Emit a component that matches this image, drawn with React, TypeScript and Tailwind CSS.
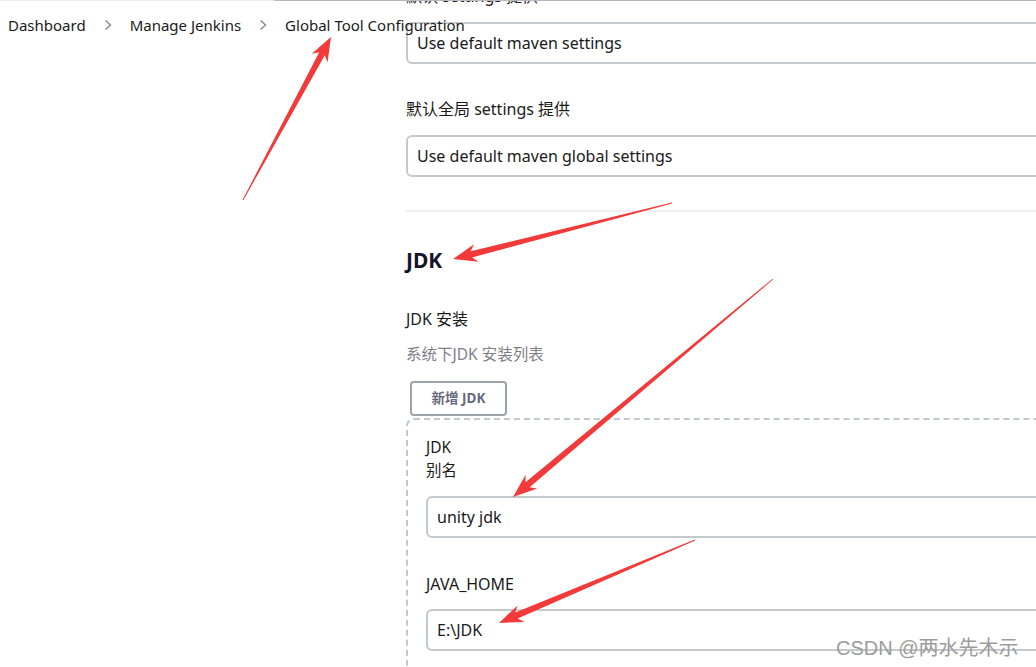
import React from 'react'

const font = { fontFamily: '"Noto Sans", "Noto Sans CJK SC", sans-serif' }

type Arrow = { tail: [number, number]; tip: [number, number] }

const arrows: Arrow[] = [
  { tail: [243, 200], tip: [331, 37] },
  { tail: [672, 203], tip: [453, 259] },
  { tail: [773, 279], tip: [513, 497] },
  { tail: [695, 540], tip: [499, 623] },
]

// tapered red arrow, thin at the tail, triangular head
function arrowPoints({ tail, tip }: Arrow) {
  const dx = tip[0] - tail[0]
  const dy = tip[1] - tail[1]
  const len = Math.hypot(dx, dy)
  const ux = dx / len, uy = dy / len
  const nx = -uy, ny = ux
  const headLen = 24, headW = 9, shaftW = 3.2, notch = 5
  const bx = tip[0] - ux * headLen, by = tip[1] - uy * headLen
  const sx = bx + ux * notch, sy = by + uy * notch
  const pts: [number, number][] = [
    [tail[0] + nx * 0.4, tail[1] + ny * 0.4],
    [sx + nx * shaftW, sy + ny * shaftW],
    [bx + nx * headW, by + ny * headW],
    tip,
    [bx - nx * headW, by - ny * headW],
    [sx - nx * shaftW, sy - ny * shaftW],
    [tail[0] - nx * 0.4, tail[1] - ny * 0.4],
  ]
  return pts.map(p => `${p[0].toFixed(1)},${p[1].toFixed(1)}`).join(' ')
}

function Chevron() {
  return (
    <svg width="8" height="12" viewBox="0 0 8 12" className="mx-[18px]">
      <path d="M1.5 1.5 L6.5 6 L1.5 10.5" fill="none" stroke="#8a8a8a" strokeWidth="1.4" />
    </svg>
  )
}

function Field({ value, className = '' }: { value: string; className?: string }) {
  return (
    <div className={`h-[42px] border-2 border-[#c3c9cd] rounded-[6px] bg-white flex items-center pl-[9px] text-[16px] text-[#1a1a1a] ${className}`}>
      {value}
    </div>
  )
}

export default function App() {
  return (
    <div className="relative w-[1036px] h-[667px] overflow-hidden bg-white" style={font}>
      <div className="flex">
        <div className="w-[406px] shrink-0" />
        <div className="w-[720px] shrink-0">
          <div className="-mt-[16px] h-[24px] leading-[24px] text-[16px] text-[#1a1a1a]">默认 settings 提供</div>
          <Field value="Use default maven settings" className="mt-[14px]" />
          <div className="mt-[33px] h-[24px] leading-[24px] text-[16px] text-[#1a1a1a]">默认全局 settings 提供</div>
          <Field value="Use default maven global settings" className="mt-[14px]" />
          <div className="mt-[33px] h-[2px] bg-[#efeff4]" />

          <div className="mt-[34px] h-[28px] leading-[28px] text-[21px] font-bold text-[#14142b]">JDK</div>
          <div className="mt-[33px] h-[24px] leading-[24px] text-[16px] text-[#1a1a1a]">JDK 安装</div>
          <div className="mt-[11px] h-[24px] leading-[24px] text-[15.5px] text-[#7d8089]">系统下JDK 安装列表</div>
          <button className="mt-[15px] ml-[4px] w-[97px] h-[35px] border-2 border-[#9ba3ab] rounded-[4px] text-[13.5px] font-bold text-[#666a7c] bg-white">
            新增 JDK
          </button>

          <div className="mt-[2px] border-2 border-dashed border-[#c2c8cc] rounded-tl-[8px] pl-[18px] pt-[16px] pb-[30px]">
            <div className="text-[15.5px] leading-[23px] text-[#1a1a1a]">JDK</div>
            <div className="text-[15.5px] leading-[23px] text-[#1a1a1a]">别名</div>
            <Field value="unity jdk" className="mt-[14px] h-[41px]" />
            <div className="mt-[34px] h-[24px] leading-[24px] text-[16px] text-[#1a1a1a]">JAVA_HOME</div>
            <Field value="E:\JDK" className="mt-[13px] h-[41px]" />
          </div>
        </div>
      </div>

      {/* top edge */}
      <div className="absolute top-0 left-0 w-full h-px bg-[#eceef0]" />
      <div className="absolute top-0 left-[274px] right-0 h-px bg-[#b4bac0]" />

      {/* breadcrumb */}
      <div className="absolute top-[13px] left-[8px] flex items-center h-[24px] text-[15px] text-[#1a1a1a] whitespace-nowrap">
        <span>Dashboard</span>
        <Chevron />
        <span>Manage Jenkins</span>
        <Chevron />
        <span>Global Tool Configuration</span>
      </div>

      {/* annotation arrows */}
      <svg className="absolute inset-0" width="1036" height="667">
        {arrows.map((a, i) => (
          <polygon key={i} points={arrowPoints(a)} fill="#f23a3a" />
        ))}
      </svg>

      <div className="absolute left-[836px] top-[635px] text-[20px] leading-[26px] text-[#9c9c9c] whitespace-nowrap" style={{ fontFamily: '"Liberation Sans", "Noto Sans CJK SC", sans-serif' }}>
        CSDN @两水先木示
      </div>
    </div>
  )
}
